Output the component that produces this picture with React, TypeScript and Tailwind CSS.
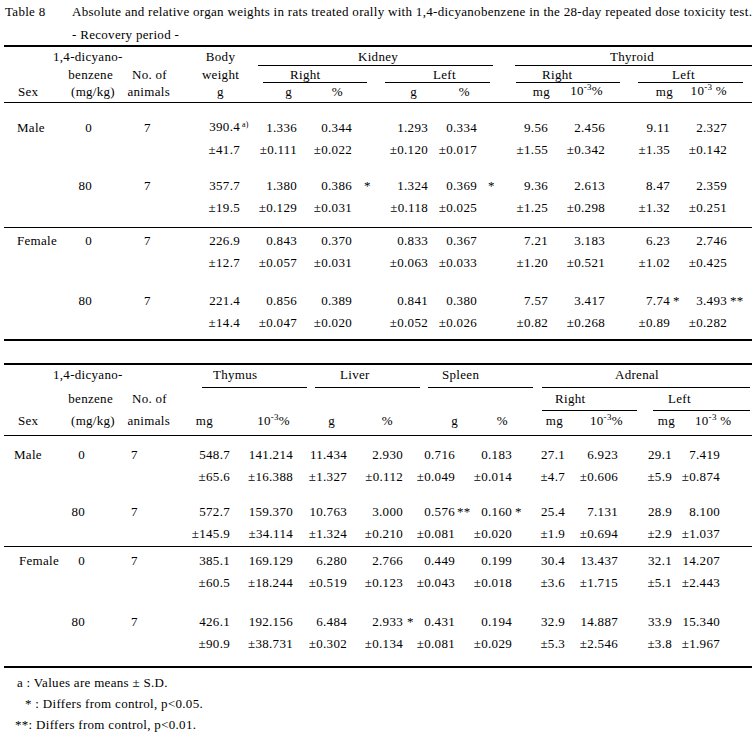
const TOP = 'grid grid-cols-[54px_42px_95px_63px_52px_65px_65px_65px_55px_70px_60px_62px]';
const BOT = 'grid grid-cols-[51px_40px_85px_60px_71px_54px_59px_46px_68px_52px_55px_50px_57px]';

interface NumCol {
  w: string;
  mk?: string;
}

// widths of the marker slot after each number, from the left-most value column on
const topCols: NumCol[] = [
  { w: 'w-[18px]', mk: 'pl-[2px]' },
  { w: 'w-[13px]' },
  { w: 'w-[23px]', mk: 'pl-[12px]' },
  { w: 'w-[12px]' },
  { w: 'w-[28px]', mk: 'pl-[11px]' },
  { w: 'w-[12px]' },
  { w: 'w-[25px]' },
  { w: 'w-[20px]', mk: 'pl-[3px]' },
  { w: 'w-[25px]', mk: 'pl-[3px]' },
];

const botCols: NumCol[] = [
  { w: 'w-[10px]' },
  { w: 'w-[18px]' },
  { w: 'w-[18px]' },
  { w: 'w-[21px]', mk: 'pl-[4px]' },
  { w: 'w-[15px]', mk: 'pl-[2px]' },
  { w: 'w-[26px]', mk: 'pl-[3px]' },
  { w: 'w-[25px]' },
  { w: 'w-[27px]' },
  { w: 'w-[23px]' },
  { w: 'w-[32px]' },
];

function Num({ value, col }: { value: string; col: NumCol }) {
  const [v, m] = value.split('|');
  return (
    <div className="flex justify-end">
      <span>{v}</span>
      <span className={`${col.w} ${col.mk ?? ''} shrink-0 text-left whitespace-nowrap`}>
        {m === 'a)' ? <span className="relative -top-[4px] text-[8px]">a)</span> : m}
      </span>
    </div>
  );
}

function DataRow({ grid, cols, sex, dose, n, values, sexPad, dosePad, nPad }: {
  grid: string;
  cols: NumCol[];
  sex?: string;
  dose?: string;
  n?: string;
  values: string[];
  sexPad: string;
  dosePad: string;
  nPad: string;
}) {
  return (
    <div className={`${grid} h-[22px] items-center`}>
      <div className={sexPad}>{sex}</div>
      <div className={`text-right ${dosePad}`}>{dose}</div>
      <div className={`text-center ${nPad}`}>{n}</div>
      {values.map((v, i) => (
        <Num key={i} value={v} col={cols[i]} />
      ))}
    </div>
  );
}

function Pow({ space }: { space?: boolean }) {
  return (
    <span className="whitespace-nowrap">
      10<span className="relative -top-[5px] text-[9px]">-3</span>
      {space ? ' ' : ''}%
    </span>
  );
}

const topRows = [
  { sex: 'Male', dose: '0', n: '7', v: ['390.4|a)', '1.336', '0.344', '1.293', '0.334', '9.56', '2.456', '9.11', '2.327'] },
  { v: ['±41.7', '±0.111', '±0.022', '±0.120', '±0.017', '±1.55', '±0.342', '±1.35', '±0.142'] },
  null,
  { dose: '80', n: '7', v: ['357.7', '1.380', '0.386|*', '1.324', '0.369|*', '9.36', '2.613', '8.47', '2.359'] },
  { v: ['±19.5', '±0.129', '±0.031', '±0.118', '±0.025', '±1.25', '±0.298', '±1.32', '±0.251'] },
];

const topRowsF = [
  { sex: 'Female', dose: '0', n: '7', v: ['226.9', '0.843', '0.370', '0.833', '0.367', '7.21', '3.183', '6.23', '2.746'] },
  { v: ['±12.7', '±0.057', '±0.031', '±0.063', '±0.033', '±1.20', '±0.521', '±1.02', '±0.425'] },
  null,
  { dose: '80', n: '7', v: ['221.4', '0.856', '0.389', '0.841', '0.380', '7.57', '3.417', '7.74|*', '3.493|**'] },
  { v: ['±14.4', '±0.047', '±0.020', '±0.052', '±0.026', '±0.82', '±0.268', '±0.89', '±0.282'] },
];

const botRows = [
  { sex: 'Male', dose: '0', n: '7', v: ['548.7', '141.214', '11.434', '2.930', '0.716', '0.183', '27.1', '6.923', '29.1', '7.419'] },
  { v: ['±65.6', '±16.388', '±1.327', '±0.112', '±0.049', '±0.014', '±4.7', '±0.606', '±5.9', '±0.874'] },
  null,
  { dose: '80', n: '7', v: ['572.7', '159.370', '10.763', '3.000', '0.576|**', '0.160|*', '25.4', '7.131', '28.9', '8.100'] },
  { v: ['±145.9', '±34.114', '±1.324', '±0.210', '±0.081', '±0.020', '±1.9', '±0.694', '±2.9', '±1.037'] },
];

const botRowsF = [
  { sex: 'Female', dose: '0', n: '7', v: ['385.1', '169.129', '6.280', '2.766', '0.449', '0.199', '30.4', '13.437', '32.1', '14.207'] },
  { v: ['±60.5', '±18.244', '±0.519', '±0.123', '±0.043', '±0.018', '±3.6', '±1.715', '±5.1', '±2.443'] },
  null,
  { dose: '80', n: '7', v: ['426.1', '192.156', '6.484', '2.933|*', '0.431', '0.194', '32.9', '14.887', '33.9', '15.340'] },
  { v: ['±90.9', '±38.731', '±0.302', '±0.134', '±0.081', '±0.029', '±5.3', '±2.546', '±3.8', '±1.967'] },
];

type RowDef = { sex?: string; dose?: string; n?: string; v: string[] } | null;

function Group({ rows, grid, cols, gap, sexPad, dosePad, nPad }: {
  rows: RowDef[];
  grid: string;
  cols: NumCol[];
  gap: string;
  sexPad: string;
  dosePad: string;
  nPad: string;
}) {
  return (
    <>
      {rows.map((r, i) =>
        r ? (
          <DataRow
            key={i}
            grid={grid}
            cols={cols}
            sex={r.sex}
            dose={r.dose}
            n={r.n}
            values={r.v}
            sexPad={r.sex === 'Female' && grid === BOT ? 'pl-[15px]' : sexPad}
            dosePad={dosePad}
            nPad={nPad}
          />
        ) : (
          <div key={i} className={gap} />
        )
      )}
    </>
  );
}

export default function App() {
  return (
    <div className="w-[755px] h-[734px] overflow-hidden bg-white text-black font-['Liberation_Serif','Times_New_Roman',serif] text-[13px] leading-[16px] tracking-[0.3px]">
      <div className="pl-[4px] pr-[3px]">
        {/* title */}
        <div className="flex h-[24px] items-center whitespace-nowrap">
          <span className="w-[68px] shrink-0 pl-[1px]">Table 8</span>
          <span>Absolute and relative organ weights in rats treated orally with 1,4-dicyanobenzene in the 28-day repeated dose toxicity test.</span>
        </div>
        <div className="flex h-[21px] items-center pl-[68px]">- Recovery period -</div>
        <div className="h-[2px] bg-black" />

        {/* table 1: kidney, thyroid */}
        <div className={`${TOP} h-[19px] items-end`}>
          <div className="col-span-3 pl-[49px] pb-[1px]">1,4-dicyano-</div>
          <div className="text-center pr-[12px] pb-[1px]">Body</div>
          <div className="col-span-4 mr-[12px] border-b border-black pl-[100px]">Kidney</div>
          <div className="col-span-4 ml-[10px] border-b border-black pl-[95px]">Thyroid</div>
        </div>
        <div className={`${TOP} h-[17px] items-end`}>
          <div className="col-span-3 flex leading-[15px] pb-[1px]">
            <span className="w-[109px] text-right">benzene</span>
            <span className="w-[54px] text-right">No. of</span>
          </div>
          <div className="text-center pr-[12px] leading-[15px] pb-[1px]">weight</div>
          <div className="col-span-2 ml-[5px] mr-[8px] border-b border-black pl-[27px] leading-[15px]">Right</div>
          <div className="col-span-2 ml-[10px] mr-[15px] border-b border-black pl-[48px] leading-[15px]">Left</div>
          <div className="col-span-2 ml-[11px] mr-[10px] border-b border-black pl-[26px] leading-[15px]">Right</div>
          <div className="col-span-2 ml-[8px] mr-[9px] border-b border-black pl-[34px] leading-[15px]">Left</div>
        </div>
        <div className={`${TOP} h-[20px] items-center border-b border-black pb-[5px]`}>
          <div className="col-span-3 flex">
            <span className="w-[55px] pl-[14px]">Sex</span>
            <span className="w-[56px] text-right">(mg/kg)</span>
            <span className="w-[55px] text-right">animals</span>
          </div>
          <div className="text-center pr-[12px]">g</div>
          <div className="text-right pr-[18px]">g</div>
          <div className="text-right pr-[32px]">%</div>
          <div className="text-right pr-[23px]">g</div>
          <div className="text-right pr-[35px]">%</div>
          <div className="text-right pr-[10px]">mg</div>
          <div className="text-right pr-[27px]"><Pow /></div>
          <div className="text-right pr-[17px]">mg</div>
          <div className="text-right pr-[25px]"><Pow space /></div>
        </div>

        <div className="h-[14px]" />
        <Group rows={topRows} grid={TOP} cols={topCols} gap="h-[14px]" sexPad="pl-[13px]" dosePad="pr-[8px]" nPad="" />
        <div className="h-[8px]" />
        <div className="h-px bg-black" />
        <div className="h-[2px]" />
        <Group rows={topRowsF} grid={TOP} cols={topCols} gap="h-[16px]" sexPad="pl-[13px]" dosePad="pr-[8px]" nPad="" />
        <div className="h-[5px]" />
        <div className="h-[2px] bg-black" />

        <div className="h-[22px]" />

        {/* table 2: thymus, liver, spleen, adrenal */}
        <div className="h-[2px] bg-black" />
        <div className={`${BOT} h-[23px] items-end`}>
          <div className="col-span-3 pl-[49px] pb-[5px]">1,4-dicyano-</div>
          <div className="col-span-2 ml-[22px] mr-[4px] border-b border-black pl-[11px] pb-[4px]">Thymus</div>
          <div className="col-span-2 ml-[4px] mr-[4px] border-b border-black pl-[25px] pb-[4px]">Liver</div>
          <div className="col-span-2 ml-[4px] mr-[5px] border-b border-black pl-[14px] pb-[4px]">Spleen</div>
          <div className="col-span-4 ml-[4px] mr-[2px] border-b border-black pl-[73px] pb-[4px]">Adrenal</div>
        </div>
        <div className={`${BOT} h-[23px] items-end`}>
          <div className="col-span-3 flex pb-[4px]">
            <span className="w-[109px] text-right">benzene</span>
            <span className="w-[54px] text-right">No. of</span>
          </div>
          <div className="col-span-6" />
          <div className="col-span-2 ml-[4px] mr-[8px] border-b border-black pl-[13px] pb-[3px]">Right</div>
          <div className="col-span-2 ml-[8px] mr-[2px] border-b border-black pl-[15px] pb-[3px]">Left</div>
        </div>
        <div className={`${BOT} h-[25px] items-center border-b border-black pb-[4px]`}>
          <div className="col-span-3 flex">
            <span className="w-[55px] pl-[14px]">Sex</span>
            <span className="w-[56px] text-right">(mg/kg)</span>
            <span className="w-[55px] text-right">animals</span>
          </div>
          <div className="text-right pr-[27px]">mg</div>
          <div className="text-right pr-[21px]"><Pow /></div>
          <div className="text-right pr-[30px]">g</div>
          <div className="text-right pr-[31px]">%</div>
          <div className="text-right pr-[12px]">g</div>
          <div className="text-right pr-[30px]">%</div>
          <div className="text-right pr-[27px]">mg</div>
          <div className="text-right pr-[28px]"><Pow /></div>
          <div className="text-right pr-[20px]">mg</div>
          <div className="text-right pr-[25px]"><Pow space /></div>
        </div>

        <div className="h-[8px]" />
        <Group rows={botRows} grid={BOT} cols={botCols} gap="h-[13px]" sexPad="pl-[10px]" dosePad="pr-[10px]" nPad="pr-[6px]" />
        <div className="h-px" />
        <div className="h-px bg-black" />
        <div className="h-[3px]" />
        <Group rows={botRowsF} grid={BOT} cols={botCols} gap="h-[17px]" sexPad="pl-[10px]" dosePad="pr-[10px]" nPad="pr-[6px]" />
        <div className="h-[11px]" />
        <div className="h-[2px] bg-black" />

        {/* footnotes */}
        <div className="h-[4px]" />
        <div className="flex h-[21px] items-center pl-[13px]">a : Values are means ± S.D.</div>
        <div className="flex h-[21px] items-center pl-[21px]">* : Differs from control, p&lt;0.05.</div>
        <div className="flex h-[21px] items-center pl-[11px]">**: Differs from control, p&lt;0.01.</div>
      </div>
    </div>
  );
}
